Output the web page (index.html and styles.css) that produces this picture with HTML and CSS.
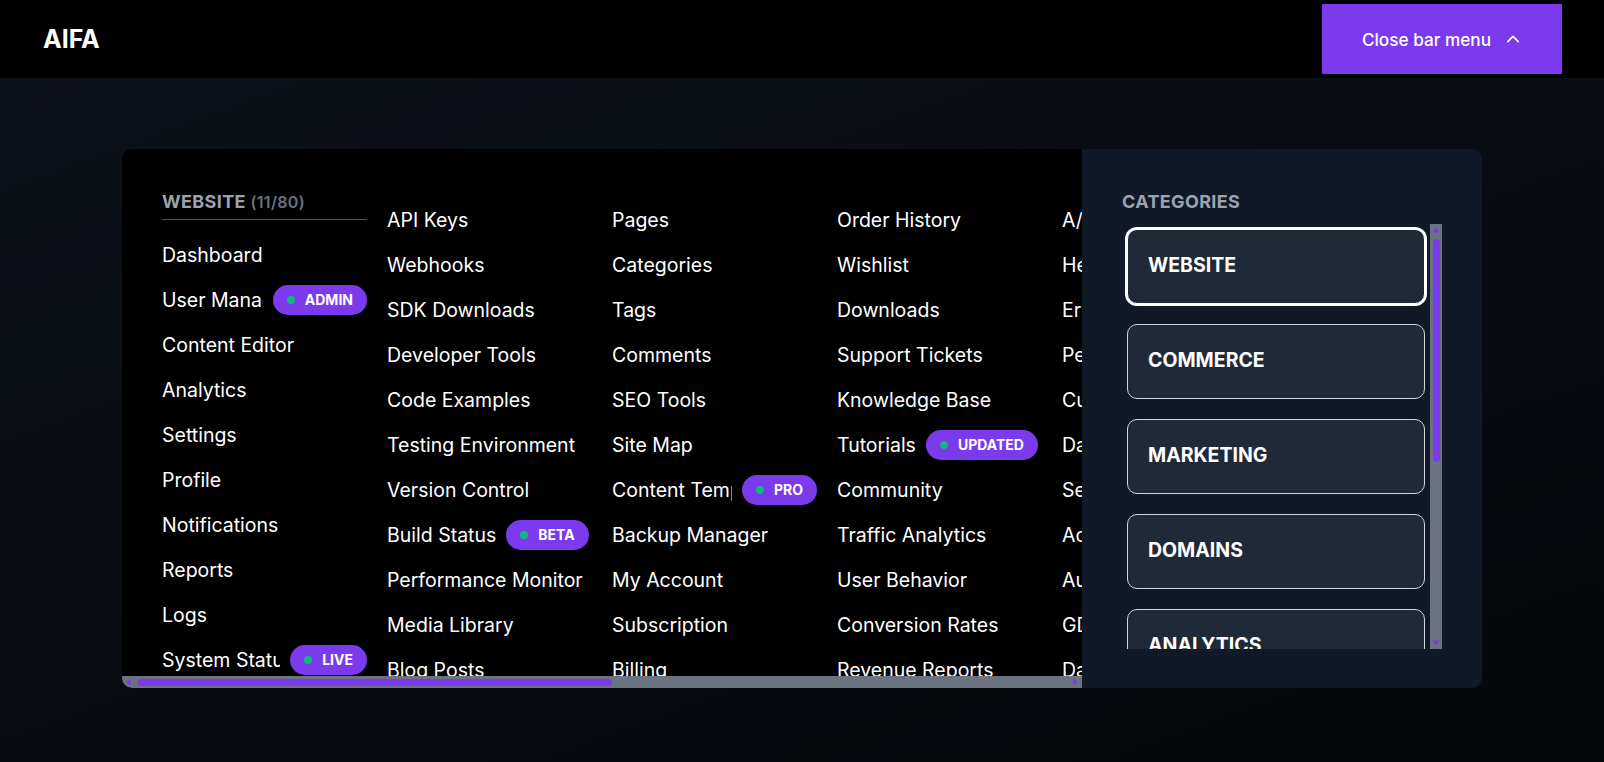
FILE: index.html
```html
<!DOCTYPE html>
<html lang="en">
<head>
<meta charset="utf-8">
<title>AIFA</title>
<link rel="stylesheet" href="styles.css">
</head>
<body>
<header class="topbar">
  <div class="brand">AIFA</div>
  <button class="menu-toggle" type="button">
    <span>Close bar menu</span>
    <svg class="chev" width="18" height="18" viewBox="0 0 24 24" aria-hidden="true"><path d="M5 15.5L12 8.5L19 15.5" fill="none" stroke="#fff" stroke-width="2.2" stroke-linecap="round" stroke-linejoin="round"/></svg>
  </button>
</header>
<main class="stage">
  <section class="mega">
    <div class="links-wrap">
      <div class="links">
        <div class="col col-first">
          <h3 class="col-title">WEBSITE <span class="count">(11/80)</span></h3>
          <a class="item"><span class="label">Dashboard</span></a>
          <a class="item"><span class="label">User Management</span><span class="badge"><i class="dot"></i>ADMIN</span></a>
          <a class="item"><span class="label">Content Editor</span></a>
          <a class="item"><span class="label">Analytics</span></a>
          <a class="item"><span class="label">Settings</span></a>
          <a class="item"><span class="label">Profile</span></a>
          <a class="item"><span class="label">Notifications</span></a>
          <a class="item"><span class="label">Reports</span></a>
          <a class="item"><span class="label">Logs</span></a>
          <a class="item"><span class="label">System Status</span><span class="badge"><i class="dot"></i>LIVE</span></a>
          <a class="item"><span class="label">Integrations</span></a>
        </div>
        <div class="col">
          <a class="item"><span class="label">API Keys</span></a>
          <a class="item"><span class="label">Webhooks</span></a>
          <a class="item"><span class="label">SDK Downloads</span></a>
          <a class="item"><span class="label">Developer Tools</span></a>
          <a class="item"><span class="label">Code Examples</span></a>
          <a class="item"><span class="label">Testing Environment</span></a>
          <a class="item"><span class="label">Version Control</span></a>
          <a class="item"><span class="label">Build Status</span><span class="badge"><i class="dot"></i>BETA</span></a>
          <a class="item"><span class="label">Performance Monitor</span></a>
          <a class="item"><span class="label">Media Library</span></a>
          <a class="item"><span class="label">Blog Posts</span></a>
          <a class="item"><span class="label">Drafts</span></a>
        </div>
        <div class="col">
          <a class="item"><span class="label">Pages</span></a>
          <a class="item"><span class="label">Categories</span></a>
          <a class="item"><span class="label">Tags</span></a>
          <a class="item"><span class="label">Comments</span></a>
          <a class="item"><span class="label">SEO Tools</span></a>
          <a class="item"><span class="label">Site Map</span></a>
          <a class="item"><span class="label">Content Templates</span><span class="badge"><i class="dot"></i>PRO</span></a>
          <a class="item"><span class="label">Backup Manager</span></a>
          <a class="item"><span class="label">My Account</span></a>
          <a class="item"><span class="label">Subscription</span></a>
          <a class="item"><span class="label">Billing</span></a>
          <a class="item"><span class="label">Invoices</span></a>
        </div>
        <div class="col">
          <a class="item"><span class="label">Order History</span></a>
          <a class="item"><span class="label">Wishlist</span></a>
          <a class="item"><span class="label">Downloads</span></a>
          <a class="item"><span class="label">Support Tickets</span></a>
          <a class="item"><span class="label">Knowledge Base</span></a>
          <a class="item"><span class="label">Tutorials</span><span class="badge"><i class="dot"></i>UPDATED</span></a>
          <a class="item"><span class="label">Community</span></a>
          <a class="item"><span class="label">Traffic Analytics</span></a>
          <a class="item"><span class="label">User Behavior</span></a>
          <a class="item"><span class="label">Conversion Rates</span></a>
          <a class="item"><span class="label">Revenue Reports</span></a>
          <a class="item"><span class="label">Forecasts</span></a>
        </div>
        <div class="col">
          <a class="item"><span class="label">A/B Testing</span></a>
          <a class="item"><span class="label">Heatmaps</span></a>
          <a class="item"><span class="label">Error Tracking</span></a>
          <a class="item"><span class="label">Permissions</span></a>
          <a class="item"><span class="label">Custom Fields</span></a>
          <a class="item"><span class="label">Data Export</span></a>
          <a class="item"><span class="label">Security</span></a>
          <a class="item"><span class="label">Activity Feed</span></a>
          <a class="item"><span class="label">Audit Trail</span></a>
          <a class="item"><span class="label">GDPR Tools</span></a>
          <a class="item"><span class="label">Data Retention</span></a>
          <a class="item"><span class="label">Cookies</span></a>
        </div>
        <div class="col">
          <a class="item"><span class="label">Localization</span></a>
          <a class="item"><span class="label">Translations</span></a>
          <a class="item"><span class="label">Themes</span></a>
          <a class="item"><span class="label">Plugins</span></a>
          <a class="item"><span class="label">Widgets</span></a>
          <a class="item"><span class="label">Menus</span></a>
          <a class="item"><span class="label">Forms</span></a>
          <a class="item"><span class="label">Surveys</span></a>
          <a class="item"><span class="label">Newsletters</span></a>
          <a class="item"><span class="label">Email Templates</span></a>
          <a class="item"><span class="label">Automations</span></a>
          <a class="item"><span class="label">Schedules</span></a>
        </div>
        <div class="col">
          <a class="item"><span class="label">Team Members</span></a>
          <a class="item"><span class="label">Roles</span></a>
          <a class="item"><span class="label">Invitations</span></a>
          <a class="item"><span class="label">Sessions</span></a>
          <a class="item"><span class="label">Devices</span></a>
          <a class="item"><span class="label">Two-Factor Auth</span></a>
          <a class="item"><span class="label">Single Sign-On</span></a>
          <a class="item"><span class="label">Password Policy</span></a>
          <a class="item"><span class="label">IP Allowlist</span></a>
          <a class="item"><span class="label">Rate Limits</span></a>
          <a class="item"><span class="label">Usage Quotas</span></a>
          <a class="item"><span class="label">Status Page</span></a>
        </div>
        <div class="col">
          <a class="item"><span class="label">Changelog</span></a>
          <a class="item"><span class="label">Roadmap</span></a>
          <a class="item"><span class="label">Feedback</span></a>
          <a class="item"><span class="label">Feature Requests</span></a>
          <a class="item"><span class="label">Release Notes</span></a>
          <a class="item"><span class="label">Documentation</span></a>
          <a class="item"><span class="label">Help Center</span></a>
          <a class="item"><span class="label">Contact Us</span></a>
          <a class="item"><span class="label">Legal</span></a>
          <a class="item"><span class="label">Privacy Policy</span></a>
          <a class="item"><span class="label">Terms of Service</span></a>
        </div>
      </div>
      <div class="hbar" aria-hidden="true">
        <span class="sb-btn"><svg width="12" height="12" viewBox="0 0 12 12"><polygon points="4,6 9,2.5 9,9.5" fill="#7c3aed"/></svg></span>
        <span class="hbar-trough"><span class="hbar-thumb"></span></span>
        <span class="sb-btn"><svg width="12" height="12" viewBox="0 0 12 12"><polygon points="8,6 3,2.5 3,9.5" fill="#7c3aed"/></svg></span>
      </div>
    </div>
    <aside class="cats">
      <h3 class="cats-title">CATEGORIES</h3>
      <div class="cats-body">
        <div class="cat-list">
          <button class="cat active" type="button">WEBSITE</button>
          <button class="cat" type="button">COMMERCE</button>
          <button class="cat" type="button">MARKETING</button>
          <button class="cat" type="button">DOMAINS</button>
          <button class="cat" type="button">ANALYTICS</button>
          <button class="cat" type="button">SOCIAL</button>
          <button class="cat" type="button">SUPPORT</button>
          <button class="cat" type="button">SETTINGS</button>
        </div>
        <div class="vbar" aria-hidden="true">
          <span class="sb-btn"><svg width="12" height="12" viewBox="0 0 12 12"><polygon points="6,3.5 9.5,8.5 2.5,8.5" fill="#7c3aed"/></svg></span>
          <span class="vbar-trough"><span class="vbar-thumb"></span></span>
          <span class="sb-btn"><svg width="12" height="12" viewBox="0 0 12 12"><polygon points="6,8.5 9.5,3.5 2.5,3.5" fill="#7c3aed"/></svg></span>
        </div>
      </div>
    </aside>
  </section>
</main>
</body>
</html>
```
FILE: styles.css
```css
* { box-sizing: border-box; }

html, body {
  margin: 0;
  padding: 0;
}

body {
  font-family: Inter, "Noto Sans", sans-serif;
  color: #ffffff;
  background: #07090d;
}

.topbar {
  height: 78px;
  background: #000000;
  display: flex;
  align-items: center;
  justify-content: space-between;
  padding: 0 42px 0 43px;
}

.brand {
  font-size: 25px;
  font-weight: 700;
  line-height: 1;
}

.menu-toggle {
  height: 70px;
  padding: 0 40px;
  border: 0;
  background: #7c3aed;
  color: #ffffff;
  font-family: Inter, "Noto Sans", sans-serif;
  font-size: 17.2px;
  font-weight: 500;
  display: flex;
  align-items: center;
  gap: 13px;
  cursor: pointer;
}

.chev { display: block; }

.stage {
  min-height: calc(100vh - 78px);
  padding: 71px 122px 0;
  background: linear-gradient(160deg, #0c1018 0%, #090c12 50%, #05070a 100%);
}

.mega {
  display: flex;
  height: 539px;
  border-radius: 10px;
  overflow: hidden;
}

/* left: link columns + scrollbar */
.links-wrap {
  flex: 0 0 960px;
  width: 960px;
  display: flex;
  flex-direction: column;
  background: #000000;
}

.links {
  flex: 1 1 auto;
  min-height: 0;
  display: flex;
  align-items: flex-start;
  gap: 20px;
  padding: 39px 40px 0;
  overflow: hidden;
}

.col {
  flex: 0 0 205px;
  width: 205px;
  display: flex;
  flex-direction: column;
  padding-top: 9px;
}

.col-first { padding-top: 0; }

.col-title {
  margin: 2px 0 12px;
  padding-bottom: 5px;
  border-bottom: 1px solid #4b5563;
  font-size: 18px;
  line-height: 24px;
  font-weight: 700;
  letter-spacing: 0.02em;
  color: #9ca3af;
  white-space: nowrap;
}

.count {
  font-size: 16px;
  font-weight: 600;
  letter-spacing: 0.02em;
  color: #6b7280;
}

.item {
  flex: none;
  height: 45px;
  display: flex;
  align-items: center;
  font-size: 19.5px;
  color: #ffffff;
  text-decoration: none;
}

.label {
  min-width: 0;
  overflow: hidden;
  white-space: nowrap;
}

.badge {
  flex: none;
  margin-left: 10px;
  height: 30px;
  padding: 0 14px;
  border-radius: 15px;
  background: #7c3aed;
  display: flex;
  align-items: center;
  gap: 10px;
  font-size: 14px;
  font-weight: 700;
  color: #ffffff;
}

.dot {
  width: 8px;
  height: 8px;
  border-radius: 50%;
  background: #10b981;
}

/* drawn scrollbars */
.hbar {
  flex: none;
  height: 12px;
  display: flex;
  background: #6b7280;
}

.sb-btn {
  flex: none;
  width: 12px;
  height: 12px;
  display: block;
}

.sb-btn svg { display: block; }

.hbar-trough {
  flex: 1 1 auto;
  display: flex;
  align-items: center;
}

.hbar-thumb {
  margin-left: 3px;
  width: 475px;
  height: 7px;
  border-radius: 4px;
  background: #7c3aed;
}

/* right: categories */
.cats {
  flex: 1 1 auto;
  min-width: 0;
  background: #111827;
  padding: 41px 40px 39px;
  display: flex;
  flex-direction: column;
}

.cats-title {
  margin: 0 0 10px;
  font-size: 18px;
  line-height: 24px;
  font-weight: 700;
  letter-spacing: 0.02em;
  color: #9ca3af;
}

.cats-body {
  flex: 1 1 auto;
  min-height: 0;
  display: flex;
}

.cat-list {
  flex: 1 1 auto;
  min-width: 0;
  overflow: hidden;
  padding: 5px;
  display: flex;
  flex-direction: column;
  gap: 20px;
}

.cat {
  flex: none;
  height: 75px;
  border: 1px solid #d1d5db;
  border-radius: 10px;
  background: #1f2937;
  color: #ffffff;
  font-family: Inter, "Noto Sans", sans-serif;
  font-size: 19.5px;
  font-weight: 700;
  text-align: left;
  padding: 0 20px 3px;
  display: flex;
  align-items: center;
  cursor: pointer;
}

.cat.active {
  border-color: #ffffff;
  box-shadow: 0 0 0 2px #ffffff;
}

.vbar {
  flex: none;
  width: 12px;
  display: flex;
  flex-direction: column;
  background: #6b7280;
}

.vbar-trough {
  flex: 1 1 auto;
  display: flex;
  justify-content: center;
}

.vbar-thumb {
  margin-top: 3px;
  width: 7px;
  height: 223px;
  border-radius: 4px;
  background: #7c3aed;
}
```
